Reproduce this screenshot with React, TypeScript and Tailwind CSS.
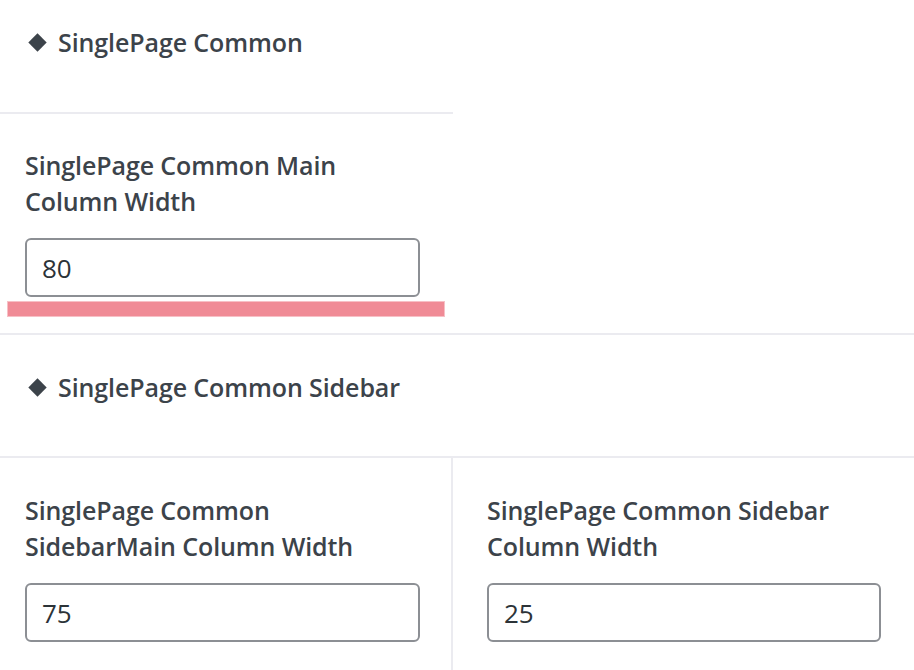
import React from "react";

function SectionHeading({ title, first }: { title: string; first?: boolean }) {
    return (
        <div className={`flex items-center gap-[11px] pl-[28px] ${first ? "pt-[24px] pb-[52px]" : "pt-[34px] pb-[51px]"}`}>
            <span className="flex items-center justify-center w-[19px] h-[36px]">
                <span className="block w-[13px] h-[13px] rotate-45 bg-[#3c434a]" />
            </span>
            <h2 className="text-[25px] leading-[36px] font-semibold text-[#3c434a] tracking-[-0.1px]">{title}</h2>
        </div>
    );
}

function Field({ lines, value }: { lines: [string, string]; value: string }) {
    return (
        <div className="flex flex-col">
            <label className="text-[25px] leading-[36px] font-semibold text-[#3c434a] whitespace-nowrap tracking-[-0.1px]">
                {lines[0]}
                <br />
                {lines[1]}
            </label>
            <input
                type="text"
                defaultValue={value}
                className="mt-[19px] w-full h-[59px] rounded-[6px] border-2 border-[#8c8f94] bg-white pl-[15px] text-[26px] text-[#2c3338] outline-none"
            />
        </div>
    );
}

export default function App() {
    return (
        <div className="w-[914px] h-[670px] overflow-hidden bg-white" style={{ fontFamily: '"Open Sans", "Noto Sans", sans-serif' }}>
            <SectionHeading title="SinglePage Common" first />

            <div className="grid grid-cols-[453px_1fr] border-b-2 border-[#ebebf0]">
                <div className="border-t-2 border-[#ebebf0] pt-[33px] pb-[16px] pl-[25px] pr-[33px]">
                    <Field lines={["SinglePage Common Main", "Column Width"]} value="80" />
                    <div className="mt-[4px] ml-[-18px] w-[438px] h-[16px] bg-[#f08b96] border border-[#f7c0c6]" />
                </div>
                <div />
            </div>

            <SectionHeading title="SinglePage Common Sidebar" />

            <div className="grid grid-cols-[453px_1fr] border-t-2 border-[#ebebf0]">
                <div className="border-r-2 border-[#ebebf0] pt-[34px] pb-[40px] pl-[25px] pr-[31px]">
                    <Field lines={["SinglePage Common", "SidebarMain Column Width"]} value="75" />
                </div>
                <div className="pt-[34px] pb-[40px] pl-[34px] pr-[33px]">
                    <Field lines={["SinglePage Common Sidebar", "Column Width"]} value="25" />
                </div>
            </div>
        </div>
    );
}
